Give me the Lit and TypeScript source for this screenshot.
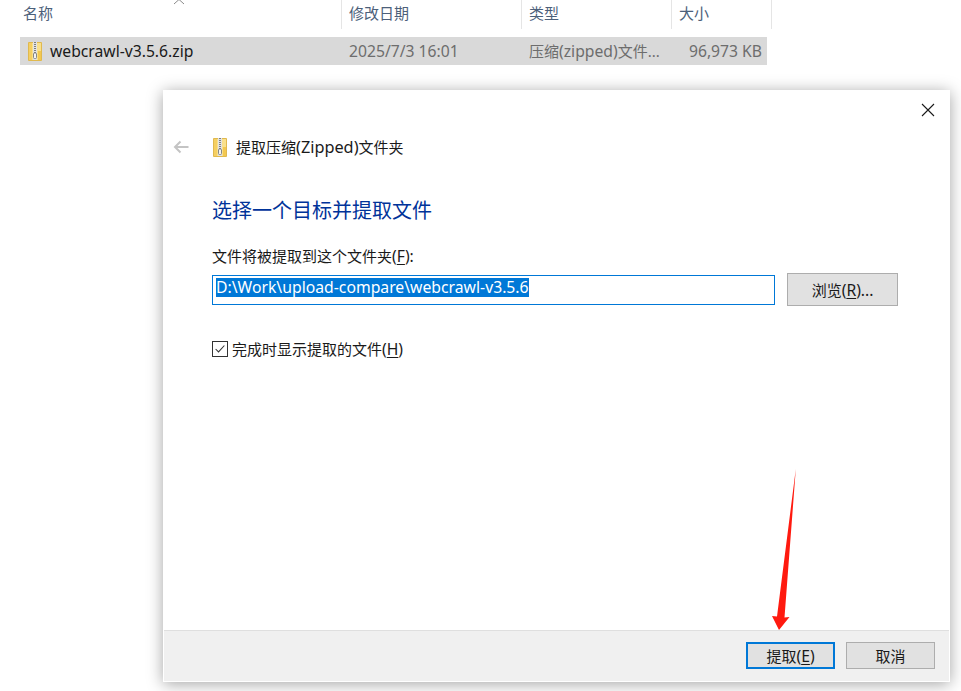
import { LitElement, html, css, svg } from "lit";
import { customElement } from "lit/decorators.js";

const zipIcon = svg`<svg class="zip" width="16" height="19" viewBox="0 0 16 19">
  <path d="M1.5 0.5 H14.5 V18.5 H1.5 Z" fill="#f9e08c" stroke="#e0b94e" stroke-width="1"/>
  <path d="M2 1 H5 V18 H2 Z" fill="#f5cf62"/>
  <path d="M11 9 H14 V18 H11 Z" fill="#f3c850"/>
  <rect x="6" y="0" width="4" height="18" fill="#e2e2e2"/>
  <path d="M8 0 V11" stroke="#7d7d7d" stroke-width="2" stroke-dasharray="1 1"/>
  <rect x="6.5" y="11" width="3" height="5.5" rx="1" fill="#f4f4f4" stroke="#868686"/>
</svg>`;

@customElement("app-root")
export class AppRoot extends LitElement {
  static styles = css`
    :host {
      display: block;
      position: relative;
      width: 961px;
      height: 691px;
      overflow: hidden;
      background: #fff;
      font-family: "Noto Sans", "Noto Sans CJK SC", sans-serif;
      font-size: 15px;
      color: #1a1a1a;
    }
    .lat { font-size: 15.7px; }
    .header {
      display: grid;
      grid-template-columns: 342px 180px 150px 100px;
      height: 29px;
    }
    .hcell {
      box-sizing: border-box;
      border-right: 1px solid #e5e5e5;
      color: #4c607a;
      line-height: 27px;
      padding-left: 7px;
    }
    .hcell:first-child { padding-left: 23px; }
    .caret {
      position: absolute;
      left: 173px;
      top: -3px;
    }
    .row {
      display: grid;
      grid-template-columns: 322px 180px 150px 95px;
      height: 28px;
      width: 747px;
      margin: 8px 0 0 20px;
      background: #d9d9d9;
      line-height: 28px;
      color: #6d6d6d;
    }
    .name { display: flex; align-items: center; gap: 7px; padding-left: 7px; color: #1a1a1a; }
    .date { padding-left: 7px; }
    .type { padding-left: 7px; white-space: nowrap; }
    .size { text-align: right; padding-right: 5px; white-space: nowrap; }
    .dialog {
      box-sizing: border-box;
      width: 787px;
      height: 592px;
      margin: 25px 0 0 163px;
      background: #fff;
      border: 1px solid #fff;
      box-shadow: 0 2px 15px rgba(0, 0, 0, 0.36);
      display: flex;
      flex-direction: column;
    }
    .body { flex: 1; position: relative; padding: 0 51px 0 48px; }
    .close {
      position: absolute;
      right: 14px;
      top: 12px;
      display: block;
    }
    .nav {
      display: flex;
      align-items: center;
      margin: 46px 0 0 -39px;
      height: 20px;
    }
    .back { margin-right: 23px; }
    .nav .zip { margin-right: 8px; }
    .nav span { color: #1a1a1a; }
    .nav .title { padding-bottom: 1px; }
    .nav .lat { font-size: 16.3px; }
    h1 {
      margin: 40px 0 0;
      font-size: 20px;
      line-height: 28px;
      font-weight: 400;
      color: #003399;
    }
    .label { margin-top: 20px; line-height: 22px; }
    u { text-underline-offset: 2px; }
    .path-row { display: flex; gap: 12px; margin-top: 6px; }
    .input {
      box-sizing: border-box;
      width: 564px;
      height: 30px;
      border: 1px solid #0078d7;
      display: flex;
      align-items: center;
      padding: 0 0 5px 3px;
      margin-top: 2px;
    }
    .input span {
      background: #0078d7;
      color: #fff;
      line-height: 19px;
      font-size: 15.75px;
      white-space: nowrap;
    }
    button {
      box-sizing: border-box;
      font: inherit;
      color: #1a1a1a;
      background: #e1e1e1;
      border: 1px solid #adadad;
      padding: 0;
    }
    .browse { width: 111px; height: 33px; }
    .check { display: flex; align-items: center; gap: 4px; margin-top: 32px; line-height: 22px; }
    .box {
      box-sizing: border-box;
      width: 16px;
      height: 16px;
      border: 1px solid #333;
      background: #fff;
      display: block;
    }
    .footer {
      height: 51px;
      box-sizing: border-box;
      border-top: 1px solid #dfdfdf;
      background: #f0f0f0;
      display: flex;
      justify-content: flex-end;
      align-items: flex-start;
      gap: 11px;
      padding: 11px 14px 0 0;
    }
    .footer button { width: 89px; height: 27px; }
    .footer .primary { border: 2px solid #0078d7; }
    .arrow { position: absolute; left: 770px; top: 468px; }
  `;

  render() {
    return html`
      <div class="header">
        <div class="hcell">名称</div>
        <div class="hcell">修改日期</div>
        <div class="hcell">类型</div>
        <div class="hcell">大小</div>
      </div>
      <svg class="caret" width="12" height="8" viewBox="0 0 12 8"><path d="M1 7 L6 2.5 L11 7" fill="none" stroke="#8a8a8a"/></svg>
      <div class="row">
        <div class="name">${zipIcon}<span class="lat">webcrawl-v3.5.6.zip</span></div>
        <div class="date lat">2025/7/3 16:01</div>
        <div class="type">压缩<span class="lat">(zipped)</span>文件...</div>
        <div class="size lat">96,973 KB</div>
      </div>
      <div class="dialog">
        <div class="body">
          <svg class="close" width="14" height="14" viewBox="0 0 14 14"><path d="M1 1 L13 13 M13 1 L1 13" stroke="#1a1a1a" stroke-width="1.1"/></svg>
          <div class="nav">
            <svg class="back" width="16" height="14" viewBox="0 0 16 14"><path d="M15.5 7 H2 M7.5 1.5 L2 7 L7.5 12.5" fill="none" stroke="#c4c4c4" stroke-width="2"/></svg>
            ${zipIcon}<span class="title">提取压缩<span class="lat">(Zipped)</span>文件夹</span>
          </div>
          <h1>选择一个目标并提取文件</h1>
          <div class="label">文件将被提取到这个文件夹<span class="lat">(<u>F</u>):</span></div>
          <div class="path-row">
            <div class="input"><span>D:\\Work\\upload-compare\\webcrawl-v3.5.6</span></div>
            <button class="browse">浏览<span class="lat">(<u>R</u>)...</span></button>
          </div>
          <div class="check">
            <svg class="box" viewBox="0 0 16 16"><path d="M3 8 L6.3 11.3 L13 4" fill="none" stroke="#333" stroke-width="1.2"/></svg>
            <span>完成时显示提取的文件<span class="lat">(<u>H</u>)</span></span>
          </div>
        </div>
        <div class="footer">
          <button class="primary">提取<span class="lat">(<u>E</u>)</span></button>
          <button>取消</button>
        </div>
      </div>
      <svg class="arrow" width="30" height="166" viewBox="0 0 30 166">
        <path d="M25.8 1 L14.5 149.5 L19.5 149 L9 162 L2 148 L7 148.5 Z" fill="#ff1a0f"/>
      </svg>
    `;
  }
}
